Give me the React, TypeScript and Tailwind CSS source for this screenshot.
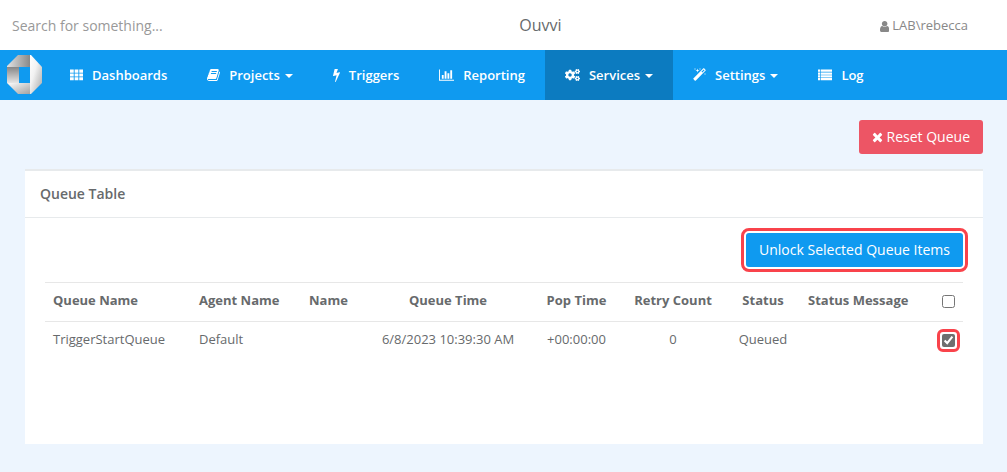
import React from 'react';
import { FaCogs } from 'react-icons/fa';

type IconProps = { d: string; width?: number; className?: string };

function Icon({ d, width = 1792, className = 'h-3.5' }: IconProps) {
  return (
    <svg viewBox={`0 0 ${width} 1792`} className={`shrink-0 ${className}`} fill="currentColor" aria-hidden="true">
      <path d={d} />
    </svg>
  );
}

const icons = {
  grid: 'M0 200h480v400h-480zM592 200h480v400h-480zM1184 200h480v400h-480zM0 690h480v400h-480zM592 690h480v400h-480zM1184 690h480v400h-480zM0 1180h480v400h-480zM592 1180h480v400h-480zM1184 1180h480v400h-480z',
  book: 'M1639 478q40 57 18 129l-275 906q-19 64-76.5 107.5t-122.5 43.5h-923q-77 0-148.5-53.5t-99.5-131.5q-24-67-2-127 0-4 3-27t4-37q1-8-3-21.5t-3-19.5q2-11 8-21t16.5-23.5 16.5-23.5q23-38 45-91.5t30-91.5q3-10 .5-30t-.5-28q3-11 17-28t17-23q21-36 42-92t25-90q1-9-2.5-32t.5-28q4-13 22-30.5t22-22.5q19-26 42.5-84.5t27.5-96.5q1-8-3-25.5t-2-26.5q2-8 9-18t18-23 17-21q8-12 16.5-30.5t15-35 16-36 19.5-32 26.5-23.5 36-11.5 47.5 5.5l-1 3q38-9 51-9h761q74 0 114 56t18 130l-274 906q-36 119-71.5 153.5t-128.5 34.5h-869q-27 0-38 15-11 16-1 43 24 70 144 70h923q29 0 56-15.5t35-41.5l300-987q7-22 5-57 38 15 59 43zm-1064 2q-4 13 2 22.5t20 9.5h608q13 0 25.5-9.5t16.5-22.5l21-64q4-13-2-22.5t-20-9.5h-608q-13 0-25.5 9.5t-16.5 22.5zm-83 256q-4 13 2 22.5t20 9.5h608q13 0 25.5-9.5t16.5-22.5l21-64q4-13-2-22.5t-20-9.5h-608q-13 0-25.5 9.5t-16.5 22.5z',
  bolt: 'M885 566q18 20 7 44l-540 1157q-13 25-42 25-4 0-14-2-17-5-25.5-19t-4.5-30l197-808-406 101q-4 1-12 1-18 0-31-11-18-15-13-39l201-825q4-16 16-26t28-10h328q19 0 32 12.5t13 29.5q0 8-5 18l-171 463 396-98q8-2 12-2 19 0 34 15z',
  chart: 'M640 896v512h-256v-512h256zm384-512v1024h-256v-1024h256zm1024 1152v128h-2048v-1536h128v1408h1920zm-640-896v768h-256v-768h256zm384-384v1152h-256v-1152h256z',
  magic: 'M1190 581l293-293-107-107-293 293zm447-293q0 27-18 45l-1286 1286q-18 18-45 18t-45-18l-198-198q-18-18-18-45t18-45l1286-1286q18-18 45-18t45 18l198 198q18 18 18 45zm-1351-190l98 30-98 30-30 98-30-98-98-30 98-30 30-98zm350 162l196 60-196 60-60 196-60-196-196-60 196-60 60-196zm930 478l98 30-98 30-30 98-30-98-98-30 98-30 30-98zm-640-640l98 30-98 30-30 98-30-98-98-30 98-30 30-98z',
  list: 'M0 200h256v290h-256zM340 200h1452v290h-1452zM0 560h256v290h-256zM340 560h1452v290h-1452zM0 920h256v290h-256zM340 920h1452v290h-1452zM0 1280h256v290h-256zM340 1280h1452v290h-1452z',
  user: 'M1280 1399q0 109-62.5 187t-150.5 78h-854q-88 0-150.5-78t-62.5-187q0-85 8.5-160.5t31.5-152 58.5-131 94-89 134.5-34.5q131 128 313 128t313-128q76 0 134.5 34.5t94 89 58.5 131 31.5 152 8.5 160.5zm-256-887q0 159-112.5 271.5t-271.5 112.5-271.5-112.5-112.5-271.5 112.5-271.5 271.5-112.5 271.5 112.5 112.5 271.5z',
  times: 'M1298 1322q0 40-28 68l-136 136q-28 28-68 28t-68-28l-294-294-294 294q-28 28-68 28t-68-28l-136-136q-28-28-28-68t28-68l294-294-294-294q-28-28-28-68t28-68l136-136q28-28 68-28t68 28l294 294 294-294q28-28 68-28t68 28l136 136q28 28 28 68t-28 68l-294 294 294 294q28 28 28 68z',
};

const navItems = [
  { label: 'Dashboards', icon: <Icon d={icons.grid} width={1664} /> },
  { label: 'Projects', icon: <Icon d={icons.book} width={1664} />, menu: true },
  { label: 'Triggers', icon: <Icon d={icons.bolt} width={896} /> },
  { label: 'Reporting', icon: <Icon d={icons.chart} width={2048} className="h-3.5 w-[15px]" /> },
  { label: 'Services', icon: <FaCogs className="h-3.5 w-[15px] shrink-0" />, menu: true, active: true },
  { label: 'Settings', icon: <Icon d={icons.magic} width={1664} />, menu: true },
  { label: 'Log', icon: <Icon d={icons.list} /> },
];

function Logo() {
  return (
    <svg viewBox="0 0 35 40" className="h-10 w-[35px]" aria-hidden="true">
      <defs>
        <linearGradient id="top" x1="0" x2="1">
          <stop offset="0" stopColor="#e2e2e2" />
          <stop offset="1" stopColor="#858585" />
        </linearGradient>
        <linearGradient id="right" x1="0" x2="1" y1="0" y2="1">
          <stop offset="0" stopColor="#ffffff" />
          <stop offset="0.4" stopColor="#f2f2f2" />
          <stop offset="1" stopColor="#a8a8a8" />
        </linearGradient>
        <linearGradient id="bottom" x1="0" x2="1" y1="0" y2="1">
          <stop offset="0.1" stopColor="#f4f4f4" />
          <stop offset="1" stopColor="#a0a0a0" />
        </linearGradient>
        <linearGradient id="left" x1="0" x2="0" y1="0" y2="1">
          <stop offset="0" stopColor="#868686" />
          <stop offset="1" stopColor="#e6e6e6" />
        </linearGradient>
      </defs>
      <path d="M11 0H24V12H0V11Z" fill="url(#top)" />
      <path d="M0 28H24V39H11Z" fill="url(#bottom)" />
      <path d="M0 12H12V28H0Z" fill="url(#left)" />
      <path d="M23 0H24L35 12V28L24 39H23Z" fill="url(#right)" />
    </svg>
  );
}

function NavBar() {
  return (
    <nav className="flex h-[50px] items-center bg-[#0f9af0] text-[13px] font-semibold text-white">
      <a href="#home" aria-label="Home" className="flex w-[50px] shrink-0 pl-[7px]">
        <Logo />
      </a>
      {navItems.map((item) => (
        <a
          key={item.label}
          href={`#${item.label.toLowerCase()}`}
          className={`flex h-full items-center px-5 ${item.active ? 'bg-[#0c7bc0]' : ''}`}
        >
          {item.icon}
          <span className="ml-[9px] pt-0.5">{item.label}</span>
          {item.menu && <span className="ml-[5px] mt-0.5 border-x-4 border-t-4 border-x-transparent border-t-white" />}
        </a>
      ))}
    </nav>
  );
}

function QueueTable() {
  return (
    <table className="w-full table-fixed border-collapse text-[13px] leading-[18px] [&_td]:px-2 [&_td]:pt-2 [&_td]:align-top [&_th]:px-2 [&_th]:pt-2 [&_th]:align-top [&_th]:font-bold">
      <colgroup>
        <col className="w-[146px]" />
        <col className="w-[110px]" />
        <col className="w-[62px]" />
        <col className="w-[170px]" />
        <col className="w-[87px]" />
        <col className="w-[106px]" />
        <col className="w-[74px]" />
        <col className="w-[134px]" />
        <col className="w-[29px]" />
      </colgroup>
      <thead>
        <tr className="h-[39px] border-y border-[#e7e7e7]">
          <th className="text-left">Queue Name</th>
          <th className="text-left">Agent Name</th>
          <th className="text-left">Name</th>
          <th>Queue Time</th>
          <th>Pop Time</th>
          <th>Retry Count</th>
          <th>Status</th>
          <th className="text-left">Status Message</th>
          <th>
            <input type="checkbox" aria-label="Select all" className="mt-1 block h-[13px] w-[13px]" />
          </th>
        </tr>
      </thead>
      <tbody>
        <tr className="h-[39px]">
          <td>TriggerStartQueue</td>
          <td>Default</td>
          <td></td>
          <td className="text-center">6/8/2023 10:39:30 AM</td>
          <td className="text-center">+00:00:00</td>
          <td className="text-center">0</td>
          <td className="text-center">Queued</td>
          <td></td>
          <td>
            <label className="mt-1 block h-[13px] w-[13px] rounded-[1px] outline-3 outline-offset-2 outline-[#f9434b]">
              <input
                type="checkbox"
                defaultChecked
                aria-label="Select TriggerStartQueue"
                className="block h-[13px] w-[13px] accent-[#6f6f6f]"
              />
            </label>
          </td>
        </tr>
      </tbody>
    </table>
  );
}

export default function App() {
  return (
    <div className="min-h-screen bg-[#edf5fe] font-['Open_Sans',sans-serif] text-[#676a6c]">
      <header className="grid h-[50px] grid-cols-[2fr_1fr_2fr] items-center bg-white pl-3 pr-[39px] pt-0.5">
        <input
          type="text"
          aria-label="Search"
          placeholder="Search for something..."
          className="text-sm outline-none placeholder:text-[#999999]"
        />
        <span className="pb-0.5 pl-[101px] text-center text-base">Ouvvi</span>
        <a href="#account" className="flex items-center gap-[3px] justify-self-end text-[13px] text-[#888888]">
          <Icon d={icons.user} width={1280} className="h-[13px]" />
          LAB\rebecca
        </a>
      </header>
      <NavBar />
      <main className="pb-7 pl-[25px] pr-6 pt-5">
        <div className="flex justify-end">
          <button className="flex h-[34px] items-center gap-1 rounded-[3px] bg-[#ed5565] px-[13px] text-sm text-white">
            <Icon d={icons.times} width={1298} />
            Reset Queue
          </button>
        </div>
        <section className="mt-[15px] border-t-2 border-[#e7eaec] bg-white">
          <h5 className="border-b border-[#e7eaec] px-[15px] py-[13px] text-sm font-semibold leading-5">Queue Table</h5>
          <div className="px-5 pb-[83px] pt-[15px]">
            <div className="mb-[15px] flex justify-end">
              <button className="h-[34px] rounded-[3px] bg-[#0f9af0] px-[13px] text-sm text-white outline-3 outline-offset-2 outline-[#f9434b]">
                Unlock Selected Queue Items
              </button>
            </div>
            <QueueTable />
          </div>
        </section>
      </main>
    </div>
  );
}
